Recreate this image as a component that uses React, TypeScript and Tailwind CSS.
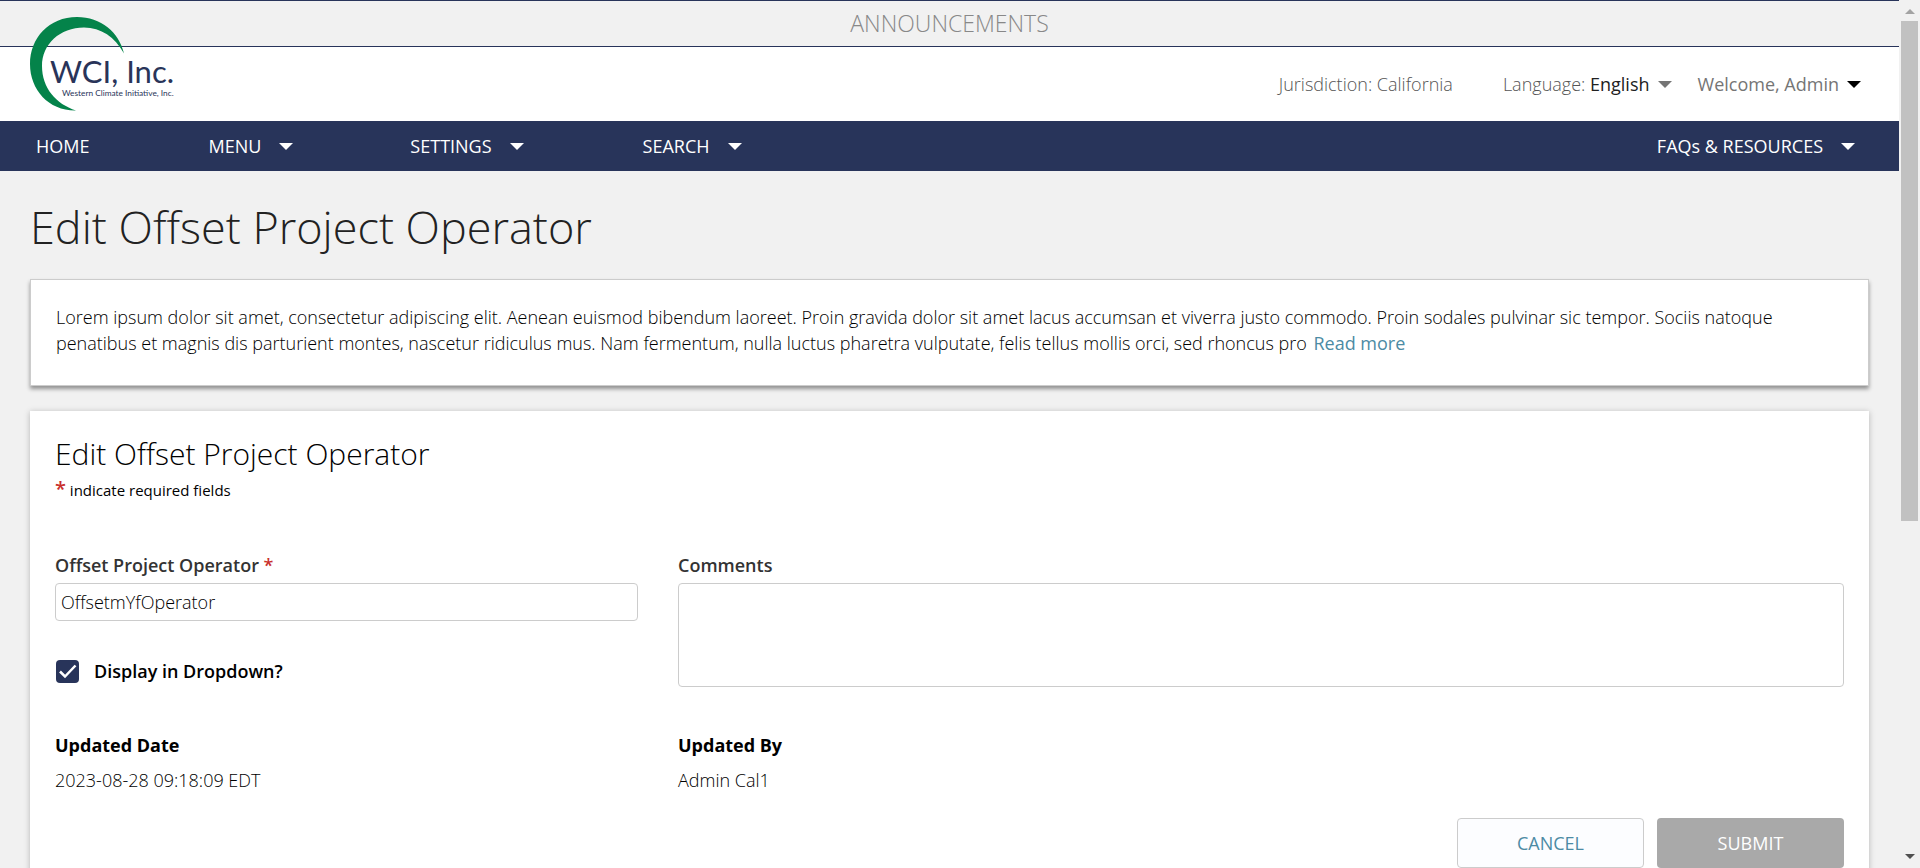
import React from "react";

function Caret({ className }: { className: string }) {
  return (
    <svg viewBox="0 0 14 7" className={`h-[7px] w-3.5 shrink-0 ${className}`} aria-hidden="true">
      <path d="M0 0h14L7 7z" fill="currentColor" />
    </svg>
  );
}

function Logo() {
  return (
    <svg viewBox="0 0 148 96" className="h-24 w-[148px]" role="img" aria-label="WCI, Inc.">
      <path
        d="M94 37.500C89 16 71 1 47 1C19 1 0 22 0 48C0 74 19 95 46 94.500C26 88 12 72 12 50C12 28 30 11.500 54 11.500C71 11.500 85 21 94 37.500z"
        fill="#04834a"
      />
      <text x="20" y="67" fontFamily="Lato, sans-serif" fontSize="31" fill="#293459">
        WCI, Inc.
      </text>
      <text x="32" y="80" fontFamily="Lato, sans-serif" fontSize="8.3" fill="#293459">
        Western Climate Initiative, Inc.
      </text>
    </svg>
  );
}

function NavItem({ label, className }: { label: string; className: string }) {
  return (
    <button type="button" className={`flex items-center gap-[18px] ${className}`}>
      {label}
      <Caret className="text-white" />
    </button>
  );
}

function Header() {
  return (
    <header>
      <div className="border-y border-[#28345a]">
        <h2 className="text-center text-[23px] leading-[45px] font-light text-[#888]">ANNOUNCEMENTS</h2>
      </div>
      <div className="relative flex h-[74px] items-center justify-end bg-white pr-[38px] text-[#757575]">
        <a href="#home" className="absolute -top-[31px] left-[30px]">
          <Logo />
        </a>
        <span className="mr-[50px] font-light text-[#555]">Jurisdiction: California</span>
        <button type="button" className="mr-[26px] flex items-center">
          <span className="font-light text-[#555]">Language:&nbsp;</span>
          <span className="mr-2 text-[#212121]">English</span>
          <Caret className="text-[#757575]" />
        </button>
        <button type="button" className="flex items-center gap-2">
          Welcome, Admin
          <Caret className="text-black" />
        </button>
      </div>
      <nav className="flex h-[50px] items-center bg-[#28345a] pr-11 pl-9 text-white">
        <a href="#home" className="mr-[119px]">
          HOME
        </a>
        <NavItem label="MENU" className="mr-[117px]" />
        <NavItem label="SETTINGS" className="mr-[119px]" />
        <NavItem label="SEARCH" className="" />
        <NavItem label="FAQs &amp; RESOURCES" className="ml-auto" />
      </nav>
    </header>
  );
}

function Scrollbar() {
  return (
    <div className="flex w-[21px] shrink-0 flex-col items-center bg-[#f1f1f1]" aria-hidden="true">
      <svg viewBox="0 0 20 21" className="h-[21px] w-5 shrink-0">
        <path d="M5 14h10l-5-5z" fill="#a3a3a3" />
      </svg>
      <div className="h-[500px] w-[17px] bg-[#c1c1c1]" />
      <svg viewBox="0 0 20 21" className="mt-auto h-[21px] w-5 shrink-0">
        <path d="M5 7h10l-5 5z" fill="#505050" />
      </svg>
    </div>
  );
}

export default function App() {
  return (
    <div className="flex h-screen overflow-hidden bg-[#f1f1f1] font-['Open_Sans',sans-serif] text-[18px] leading-[26px] text-black">
      <div className="min-w-0 flex-1 overflow-hidden">
        <Header />
        <main className="px-[30px]">
          <h1 className="pt-[26px] pb-[22px] text-[45px] leading-[60px] font-light text-[#222]">
            Edit Offset Project Operator
          </h1>
          <section className="border border-[#ccc] bg-white px-[25px] pt-6 pb-[29px] font-light text-black shadow-[0_3px_4px_rgba(0,0,0,0.4)]">
            <p>
              Lorem ipsum dolor sit amet, consectetur adipiscing elit. Aenean euismod bibendum laoreet. Proin gravida
              dolor sit amet lacus accumsan et viverra justo commodo. Proin sodales pulvinar sic tempor. Sociis natoque
              penatibus et magnis dis parturient montes, nascetur ridiculus mus. Nam fermentum, nulla luctus pharetra
              vulputate, felis tellus mollis orci, sed rhoncus pro{" "}
              <a href="#more" className="ml-0.5 font-normal text-[#4c8ba4]">
                Read more
              </a>
            </p>
          </section>
          <form className="mt-[25px] bg-white px-[25px] pt-[23px] pb-8 shadow-[0_1px_6px_rgba(0,0,0,0.25)]">
            <h2 className="text-[30px] leading-10 font-light">Edit Offset Project Operator</h2>
            <p className="text-[15px] leading-8">
              <span className="text-xl leading-none font-semibold text-[#c9302c]">*</span> indicate required fields
            </p>
            <div className="mt-[46px] grid grid-cols-[1fr_2fr] gap-x-10">
              <div>
                <label htmlFor="operator" className="block pb-[5px] font-semibold text-[#333]">
                  Offset Project Operator <span className="text-[#c9302c]">*</span>
                </label>
                <input
                  id="operator"
                  defaultValue="OffsetmYfOperator"
                  className="block h-[38px] w-full rounded border border-[#ccc] px-[5px] font-light text-black"
                />
                <label className="mt-[37px] flex items-center gap-[15px] font-semibold">
                  <span className="relative ml-px size-[23px]">
                    <input
                      type="checkbox"
                      defaultChecked
                      className="block size-[23px] appearance-none rounded-sm bg-[#28345a]"
                    />
                    <svg viewBox="0 0 23 23" className="pointer-events-none absolute inset-0" aria-hidden="true">
                      <path d="M4 11.500l5 5L19.500 5.500" fill="none" stroke="#fff" strokeWidth="2.500" />
                    </svg>
                  </span>
                  Display in Dropdown?
                </label>
              </div>
              <div>
                <label htmlFor="comments" className="block pb-[5px] font-semibold text-[#333]">
                  Comments
                </label>
                <textarea
                  id="comments"
                  className="block h-[104px] w-full resize-none rounded border border-[#ccc] px-[5px]"
                />
              </div>
            </div>
            <dl className="mt-[45px] grid grid-cols-[1fr_2fr] gap-x-10">
              <div className="flex flex-col gap-[9px]">
                <dt className="font-bold">Updated Date</dt>
                <dd className="font-light">2023-08-28 09:18:09 EDT</dd>
              </div>
              <div className="flex flex-col gap-[9px]">
                <dt className="font-bold">Updated By</dt>
                <dd className="font-light">Admin Cal1</dd>
              </div>
            </dl>
            <div className="mt-[25px] flex justify-end gap-[13px]">
              <button
                type="button"
                className="h-[50px] w-[187px] rounded border border-[#ccc] bg-[#fcfdff] text-[#4c8ba4]"
              >
                CANCEL
              </button>
              <button type="submit" className="h-[50px] w-[187px] rounded bg-[#a9a9a9] font-medium text-white">
                SUBMIT
              </button>
            </div>
          </form>
        </main>
      </div>
      <Scrollbar />
    </div>
  );
}
